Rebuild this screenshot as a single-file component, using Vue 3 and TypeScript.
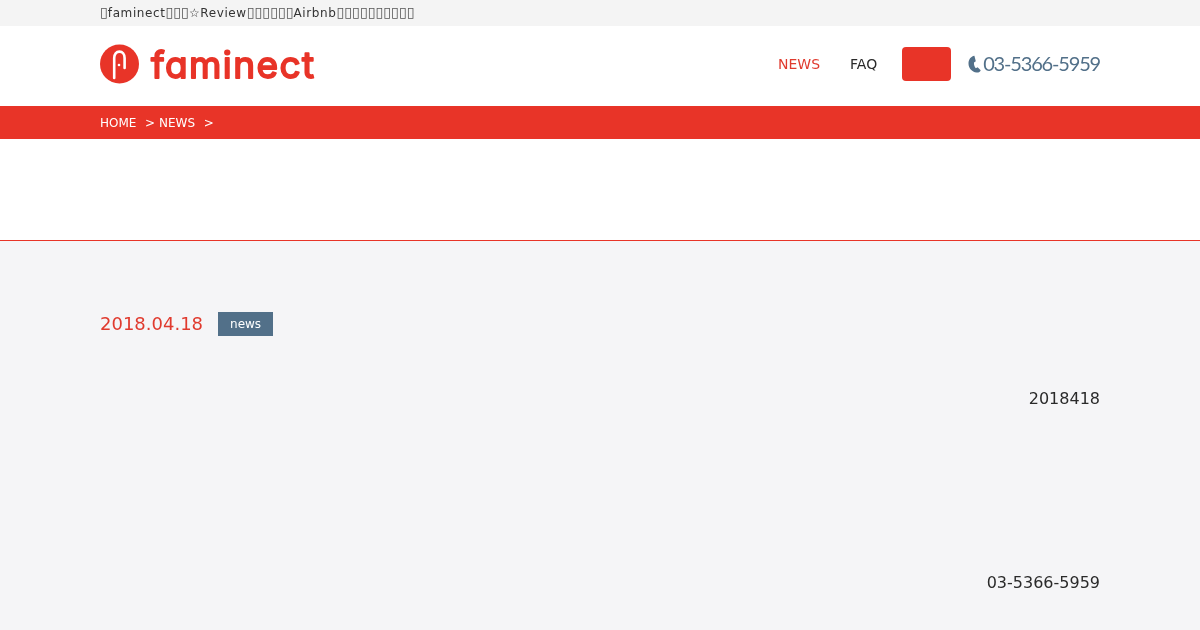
<template>
  <div class="page">
    <div class="topbar">
      <p class="wrap topbar_text"><span class="tofu">▯</span>faminect<span class="tofu">▯▯▯</span>☆Review<span class="tofu">▯▯▯▯▯▯</span>Airbnb<span class="tofu">▯▯▯▯▯▯▯▯▯▯</span></p>
    </div>
    <header class="header">
      <div class="wrap header_inner">
        <a class="logo" href="#">
          <svg class="logo_mark" width="39" height="40" viewBox="0 0 39 40">
            <circle cx="19.5" cy="20" r="19.5" fill="#e83428" />
            <path d="M14.2 34V14C14.2 10 16.4 7.6 19.4 7.6C22.4 7.6 24.6 10 24.6 14V24" fill="none" stroke="#fff" stroke-width="2.6" stroke-linecap="round" />
            <circle cx="19" cy="21" r="1.3" fill="#fff" />
          </svg>
          <svg class="logo_word" width="170" height="40" viewBox="0 0 170 40">
            <text x="0" y="34" textLength="163" class="logo_text">faminect</text>
          </svg>
        </a>
        <nav class="nav">
          <a class="nav_link active" href="#">NEWS</a>
          <a class="nav_link" href="#">FAQ</a>
          <a class="nav_button" href="#"></a>
          <span class="tel">
            <svg class="tel_icon" width="13" height="18" viewBox="0 0 13 18">
              <path d="M6.4 0.8C2.8 1.4 0.5 4.6 0.5 8.4C0.5 12.8 3.8 16.8 8.6 17.5C10.6 17.7 12.2 16.8 12.7 15.2L9.6 12.2L7.8 13.2C6.4 11.8 5.8 9.6 6 7.6L7.8 6.2Z" fill="#527089" />
            </svg>
            <span class="tel_number">03-5366-5959</span>
          </span>
        </nav>
      </div>
    </header>
    <div class="crumbs">
      <div class="wrap crumbs_inner">
        <a href="#">HOME</a>
        <span class="sep">&gt;</span>
        <a href="#">NEWS</a>
        <span class="sep">&gt;</span>
      </div>
    </div>
    <div class="hero"></div>
    <main class="main">
      <div class="wrap">
        <div class="meta">
          <span class="date">2018.04.18</span>
          <span class="tag">news</span>
        </div>
        <p class="body_date">2018418</p>
        <p class="body_tel">03-5366-5959</p>
      </div>
    </main>
  </div>
</template>

<script setup lang="ts">
</script>

<style>
html,
body {
  margin: 0;
  background: #f5f5f7;
}
</style>

<style scoped>
.page {
  height: 630px;
  overflow: hidden;
  font-family: "DejaVu Sans", sans-serif;
  color: #2a2a2a;
  will-change: transform;
}

a {
  color: inherit;
  text-decoration: none;
}

p {
  margin: 0;
}

.wrap {
  width: 1000px;
  margin: 0 auto;
}

.topbar {
  height: 26px;
  background: #f4f4f4;
}

.topbar_text {
  font-size: 12px;
  line-height: 27px;
  letter-spacing: 0.6px;
  color: #333;
}

.tofu {
  font-size: 14px;
  letter-spacing: 0.1px;
  line-height: 1;
  color: #555;
}

.header {
  height: 80px;
  background: #fff;
}

.header_inner {
  height: 76px;
  display: flex;
  justify-content: space-between;
  align-items: center;
}

.logo {
  display: flex;
  align-items: center;
  gap: 12px;
}

.logo_word {
  display: block;
  overflow: visible;
}

/* cv11: one-storey a, closer to the wordmark */
.logo_text {
  font-family: "Inter", sans-serif;
  font-size: 37px;
  font-weight: 400;
  font-feature-settings: "cv11";
  fill: #e83428;
  stroke: #e83428;
  stroke-width: 1.8px;
  stroke-linejoin: round;
}

.nav {
  display: flex;
  align-items: center;
}

.nav_link {
  font-size: 14px;
  margin-right: 30px;
}

.nav_link.active {
  color: #e03a2e;
}

.nav_link + .nav_button {
  margin-left: -5px;
}

.nav_button {
  width: 49px;
  height: 34px;
  border-radius: 4px;
  background: #e83428;
}

.tel {
  display: flex;
  align-items: center;
  margin-left: 17px;
  font-family: "Lato", sans-serif;
  font-size: 20px;
  letter-spacing: -1.17px;
  color: #527089;
}

.tel_icon {
  margin-right: 2px;
}

.tel_number {
  padding-bottom: 2px;
}

.crumbs {
  height: 33px;
  background: #e83428;
  color: #fff;
}

.crumbs_inner {
  height: 100%;
  display: flex;
  align-items: center;
  font-size: 12px;
}

.sep {
  margin-left: 8.6px;
  width: 14px;
}

.hero {
  height: 101px;
  background: #fff;
  border-bottom: 1px solid #e83428;
}

.main {
  padding-top: 71px;
}

.meta {
  display: flex;
  align-items: center;
  gap: 15px;
}

.date {
  padding-bottom: 2px;
  font-size: 18px;
  color: #e03a2e;
}

.tag {
  width: 55px;
  height: 24px;
  line-height: 24px;
  text-align: center;
  font-size: 12px;
  color: #fff;
  background: #527089;
}

.body_date,
.body_tel {
  text-align: right;
  font-size: 16px;
  line-height: 24px;
}

.body_date {
  margin-top: 51px;
}

.body_tel {
  margin-top: 160px;
}
</style>
